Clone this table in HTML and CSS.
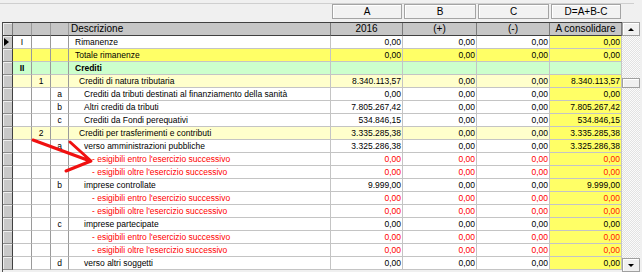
FILE: index.html
```html
<!DOCTYPE html>
<html lang="it">
<head>
  <meta charset="UTF-8">
  <title>Consolidato - Crediti</title>
  <link rel="stylesheet" href="styles.css">
</head>
<body>
  <div class="topbar"></div>

  <div class="letters">
    <div></div>
    <div class="letter">A</div>
    <div class="letter">B</div>
    <div class="letter">C</div>
    <div class="letter">D=A+B-C</div>
  </div>

  <div class="sheet">
    <div class="grid">
      <div class="row head">
        <div class="ind"></div><div></div><div></div><div></div>
        <div class="desc-h">Descrizione</div>
        <div>2016</div><div>(+)</div><div>(-)</div><div>A consolidare</div>
      </div>

      <div class="row">
        <div class="ind"><span class="cur"></span></div>
        <div class="c">I</div><div></div><div></div>
        <div class="desc l0">Rimanenze</div>
        <div class="num">0,00</div><div class="num">0,00</div><div class="num">0,00</div><div class="num d">0,00</div>
      </div>
      <div class="row yellow">
        <div class="ind"></div><div></div><div></div><div></div>
        <div class="desc l0">Totale rimanenze</div>
        <div class="num">0,00</div><div class="num">0,00</div><div class="num">0,00</div><div class="num d">0,00</div>
      </div>
      <div class="row green">
        <div class="ind"></div>
        <div class="c bold">II</div><div></div><div></div>
        <div class="desc l0 bold">Crediti</div>
        <div class="num"></div><div class="num"></div><div class="num"></div><div class="num"></div>
      </div>
      <div class="row pale">
        <div class="ind"></div>
        <div></div><div class="c">1</div><div></div>
        <div class="desc l1">Crediti di natura tributaria</div>
        <div class="num">8.340.113,57</div><div class="num">0,00</div><div class="num">0,00</div><div class="num d">8.340.113,57</div>
      </div>
      <div class="row">
        <div class="ind"></div>
        <div></div><div></div><div class="c">a</div>
        <div class="desc l2">Crediti da tributi destinati al finanziamento della sanità</div>
        <div class="num">0,00</div><div class="num">0,00</div><div class="num">0,00</div><div class="num d">0,00</div>
      </div>
      <div class="row">
        <div class="ind"></div>
        <div></div><div></div><div class="c">b</div>
        <div class="desc l2">Altri crediti da tributi</div>
        <div class="num">7.805.267,42</div><div class="num">0,00</div><div class="num">0,00</div><div class="num d">7.805.267,42</div>
      </div>
      <div class="row">
        <div class="ind"></div>
        <div></div><div></div><div class="c">c</div>
        <div class="desc l2">Crediti da Fondi perequativi</div>
        <div class="num">534.846,15</div><div class="num">0,00</div><div class="num">0,00</div><div class="num d">534.846,15</div>
      </div>
      <div class="row pale">
        <div class="ind"></div>
        <div></div><div class="c">2</div><div></div>
        <div class="desc l1">Crediti per trasferimenti e contributi</div>
        <div class="num">3.335.285,38</div><div class="num">0,00</div><div class="num">0,00</div><div class="num d">3.335.285,38</div>
      </div>
      <div class="row">
        <div class="ind"></div>
        <div></div><div></div><div class="c">a</div>
        <div class="desc l2">verso amministrazioni pubbliche</div>
        <div class="num">3.325.286,38</div><div class="num">0,00</div><div class="num">0,00</div><div class="num d">3.325.286,38</div>
      </div>
      <div class="row red">
        <div class="ind"></div><div></div><div></div><div></div>
        <div class="desc l3">- esigibili entro l'esercizio successivo</div>
        <div class="num">0,00</div><div class="num">0,00</div><div class="num">0,00</div><div class="num d">0,00</div>
      </div>
      <div class="row red">
        <div class="ind"></div><div></div><div></div><div></div>
        <div class="desc l3">- esigibili oltre l'esercizio successivo</div>
        <div class="num">0,00</div><div class="num">0,00</div><div class="num">0,00</div><div class="num d">0,00</div>
      </div>
      <div class="row">
        <div class="ind"></div>
        <div></div><div></div><div class="c">b</div>
        <div class="desc l2">imprese controllate</div>
        <div class="num">9.999,00</div><div class="num">0,00</div><div class="num">0,00</div><div class="num d">9.999,00</div>
      </div>
      <div class="row red">
        <div class="ind"></div><div></div><div></div><div></div>
        <div class="desc l3">- esigibili entro l'esercizio successivo</div>
        <div class="num">0,00</div><div class="num">0,00</div><div class="num">0,00</div><div class="num d">0,00</div>
      </div>
      <div class="row red">
        <div class="ind"></div><div></div><div></div><div></div>
        <div class="desc l3">- esigibili oltre l'esercizio successivo</div>
        <div class="num">0,00</div><div class="num">0,00</div><div class="num">0,00</div><div class="num d">0,00</div>
      </div>
      <div class="row">
        <div class="ind"></div>
        <div></div><div></div><div class="c">c</div>
        <div class="desc l2">imprese partecipate</div>
        <div class="num">0,00</div><div class="num">0,00</div><div class="num">0,00</div><div class="num d">0,00</div>
      </div>
      <div class="row red">
        <div class="ind"></div><div></div><div></div><div></div>
        <div class="desc l3">- esigibili entro l'esercizio successivo</div>
        <div class="num">0,00</div><div class="num">0,00</div><div class="num">0,00</div><div class="num d">0,00</div>
      </div>
      <div class="row red">
        <div class="ind"></div><div></div><div></div><div></div>
        <div class="desc l3">- esigibili oltre l'esercizio successivo</div>
        <div class="num">0,00</div><div class="num">0,00</div><div class="num">0,00</div><div class="num d">0,00</div>
      </div>
      <div class="row">
        <div class="ind"></div>
        <div></div><div></div><div class="c">d</div>
        <div class="desc l2">verso altri soggetti</div>
        <div class="num">0,00</div><div class="num">0,00</div><div class="num">0,00</div><div class="num d">0,00</div>
      </div>
    </div>

    <div class="scrollbar">
      <div class="sb-btn"><span class="arrow up"></span></div>
      <div class="track"><div class="thumb"></div></div>
      <div class="sb-btn"><span class="arrow down"></span></div>
    </div>
  </div>

  <svg class="pointer" width="100" height="60" viewBox="20 130 100 60">
    <path d="M33 140 L90 161 M70 142 L91 161 L66 171" fill="none" stroke="#f01010" stroke-width="3" stroke-linecap="round" stroke-linejoin="round"/>
  </svg>
</body>
</html>
```

FILE: styles.css
```css
* {
  box-sizing: border-box;
}

body {
  margin: 0;
  width: 642px;
  height: 272px;
  overflow: hidden;
  position: relative;
  background: #f0f0f0;
  font-family: "Liberation Sans", Arial, sans-serif;
  color: #000;
}

.topbar {
  height: 4px;
  width: 634px;
  border-bottom: 1px solid #cfcfcf;
}

.letters {
  display: grid;
  grid-template-columns: 329px 72px 74px 73px 72px;
  height: 15px;
  margin: 0 0 3px 2px;
}

.letter {
  margin: 0 1px 0 1px;
  border: 1px solid #a4a4a4;
  background: #f2f2f2;
  box-shadow: inset 1px 1px #fff;
  font-size: 10px;
  line-height: 13px;
  text-align: center;
}

.sheet {
  display: flex;
  margin-left: 2px;
}

.grid {
  border-left: 1px solid #505050;
  border-top: 1px solid #404040;
}

.row {
  display: grid;
  grid-template-columns: 10px 19px 19px 18px 262px 72px 74px 73px 72px;
  height: 13px;
  background: #fff;
  font-size: 8.5px;
  line-height: 12px;
}

.row > div {
  border-right: 1px solid #c4c4c4;
  border-bottom: 1px solid #c4c4c4;
  white-space: nowrap;
  overflow: hidden;
}

.row.head {
  height: 13px;
  font-size: 10px;
  background: #c6c6c6;
}

.row.head > div {
  border-right: 1px solid #7a7a7a;
  border-bottom: 1px solid #404040;
  text-align: center;
}

.row.head > .desc-h {
  text-align: left;
  padding-left: 2px;
}

.row > .ind {
  position: relative;
  background: #c8c8c8;
  border-right: 1px solid #404040;
  border-bottom: 1px solid #8a8a8a;
  box-shadow: inset 1px 1px #efefef;
}

.cur {
  position: absolute;
  left: 1px;
  top: 2px;
  border-left: 5px solid #000;
  border-top: 4px solid transparent;
  border-bottom: 4px solid transparent;
}

.row > div:nth-child(2),
.row > div:nth-child(3),
.row > div:nth-child(4) {
  border-right-color: #9a9a9a;
}

.c {
  text-align: center;
}

.bold {
  font-weight: bold;
}

.desc.l0 { padding-left: 6px; }
.desc.l1 { padding-left: 10px; }
.desc.l2 { padding-left: 15px; }
.desc.l3 { padding-left: 23px; }

.num {
  text-align: right;
  padding-right: 1px;
}

.num.d {
  background: #ffff66;
}

.row.yellow {
  background: #ffff66;
}

.row.green,
.row.green .num.d {
  background: #ccffcc;
}

.row.pale {
  background: #ffffcc;
}

.row.red {
  color: #ff0000;
}

.row.red .num.d {
  color: #ff1a00;
}

.scrollbar {
  width: 18px;
  height: 250px;
  display: flex;
  flex-direction: column;
}

.sb-btn {
  height: 14px;
  display: flex;
  align-items: center;
  justify-content: center;
  background: #f0f0f0;
  border: 1px solid #a0a0a0;
  box-shadow: inset 1px 1px #fff;
}

.arrow {
  border-left: 3px solid transparent;
  border-right: 3px solid transparent;
}

.arrow.up {
  border-bottom: 3px solid #000;
}

.arrow.down {
  border-top: 3px solid #000;
}

.track {
  flex: 1;
  background: repeating-conic-gradient(#e2e2e2 0 25%, #fbfbfb 0 50%) 0 0 / 2px 2px;
}

.thumb {
  margin-top: 42px;
  height: 10px;
  background: #f0f0f0;
  border: 1px solid #a0a0a0;
  box-shadow: inset 1px 1px #fff;
}

.pointer {
  position: absolute;
  left: 20px;
  top: 130px;
}
```
